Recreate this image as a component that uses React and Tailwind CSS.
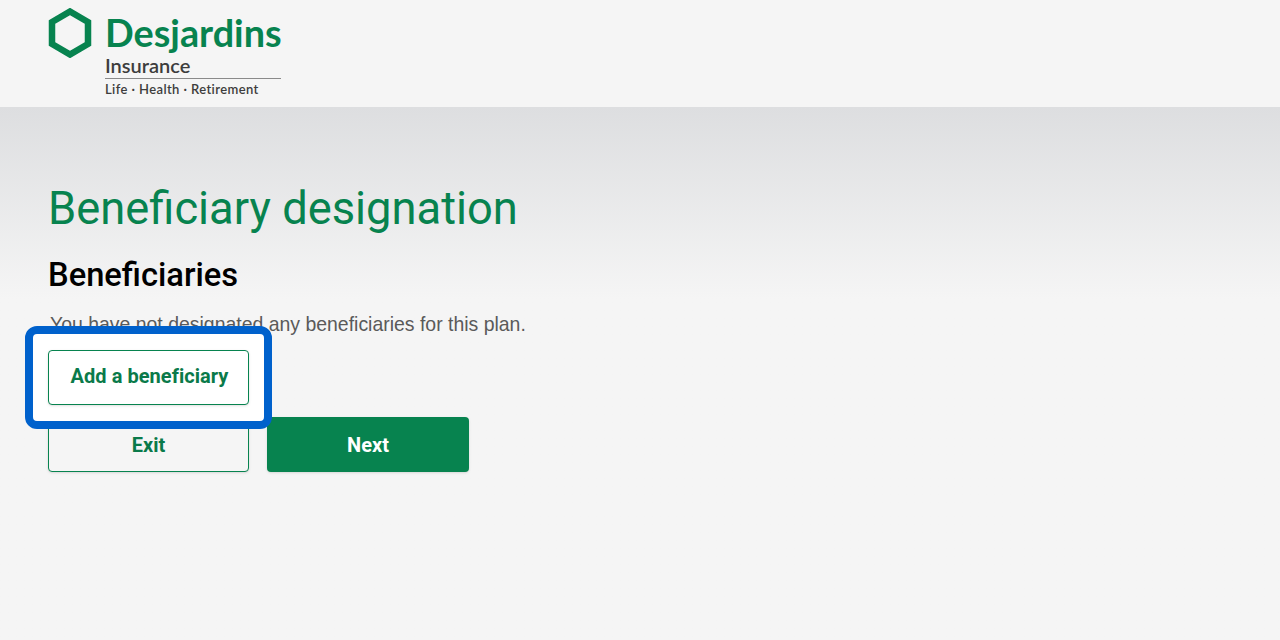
function Logo() {
  return (
    <div className="flex items-start gap-[13px]">
      <svg width="44" height="50" viewBox="0 0 44 50" className="mt-[8px] shrink-0">
        <path d="M22 3.5 L40 14 V36 L22 46.5 L4 36 V14 Z" fill="none" stroke="#07834f" strokeWidth="6.5" strokeLinejoin="miter" />
      </svg>
      <div className="w-[176px] pt-[10px] font-['Lato',sans-serif]">
        <div className="h-[44px] text-[37.8px] leading-[46px] font-bold text-[#07834f]">Desjardins</div>
        <div className="h-[25px] border-b border-[#8a8a8a] text-[20px] leading-[22px] font-semibold text-[#3d3d3d]">Insurance</div>
        <div className="mt-[1px] text-[13px] leading-[18px] font-semibold tracking-[0.4px] text-[#3d3d3d]">Life · Health · Retirement</div>
      </div>
    </div>
  )
}

export default function App() {
  return (
    <div className="min-h-[640px] bg-[#f5f5f5] font-['Roboto',sans-serif]">
      <header className="h-[107px] pl-[48px]">
        <Logo />
      </header>
      <main className="h-[533px] bg-gradient-to-b from-[#dddee0] to-[#f5f5f5] to-[36%] px-[48px] pt-[73px]">
        <h1 className="text-[45.3px] leading-[58px] text-[#07834f]">Beneficiary designation</h1>
        <h2 className="mt-[18px] text-[32.7px] leading-[38px] font-medium text-black">Beneficiaries</h2>
        <p className="mt-[16px] pl-[2px] font-['Liberation_Sans',sans-serif] text-[19.45px] leading-[28px] text-[#5a5a5a]">You have not designated any beneficiaries for this plan.</p>
        <div className="relative mt-[12px] w-[201px]">
          <div className="absolute -top-[24px] -right-[23px] -bottom-[24px] -left-[23px] rounded-[12px] border-[8px] border-[#0061cc] bg-white" />
          <button type="button" className="relative block h-[55px] w-[201px] rounded-[4px] border border-[#07834f] bg-white pb-[3px] pl-[2px] text-[20px] font-bold tracking-[0.05px] text-[#0a7a4a] shadow-sm">
            Add a beneficiary
          </button>
        </div>
        <div className="mt-[12px] flex gap-[18px]">
          <button type="button" className="h-[55px] w-[201px] rounded-[4px] border border-[#07834f] bg-[#f5f5f5] text-[20px] font-bold text-[#0a7a4a] shadow-sm">
            Exit
          </button>
          <button type="button" className="h-[55px] w-[202px] rounded-[4px] bg-[#07834f] text-[20px] font-bold text-white shadow-sm">
            Next
          </button>
        </div>
      </main>
    </div>
  )
}
